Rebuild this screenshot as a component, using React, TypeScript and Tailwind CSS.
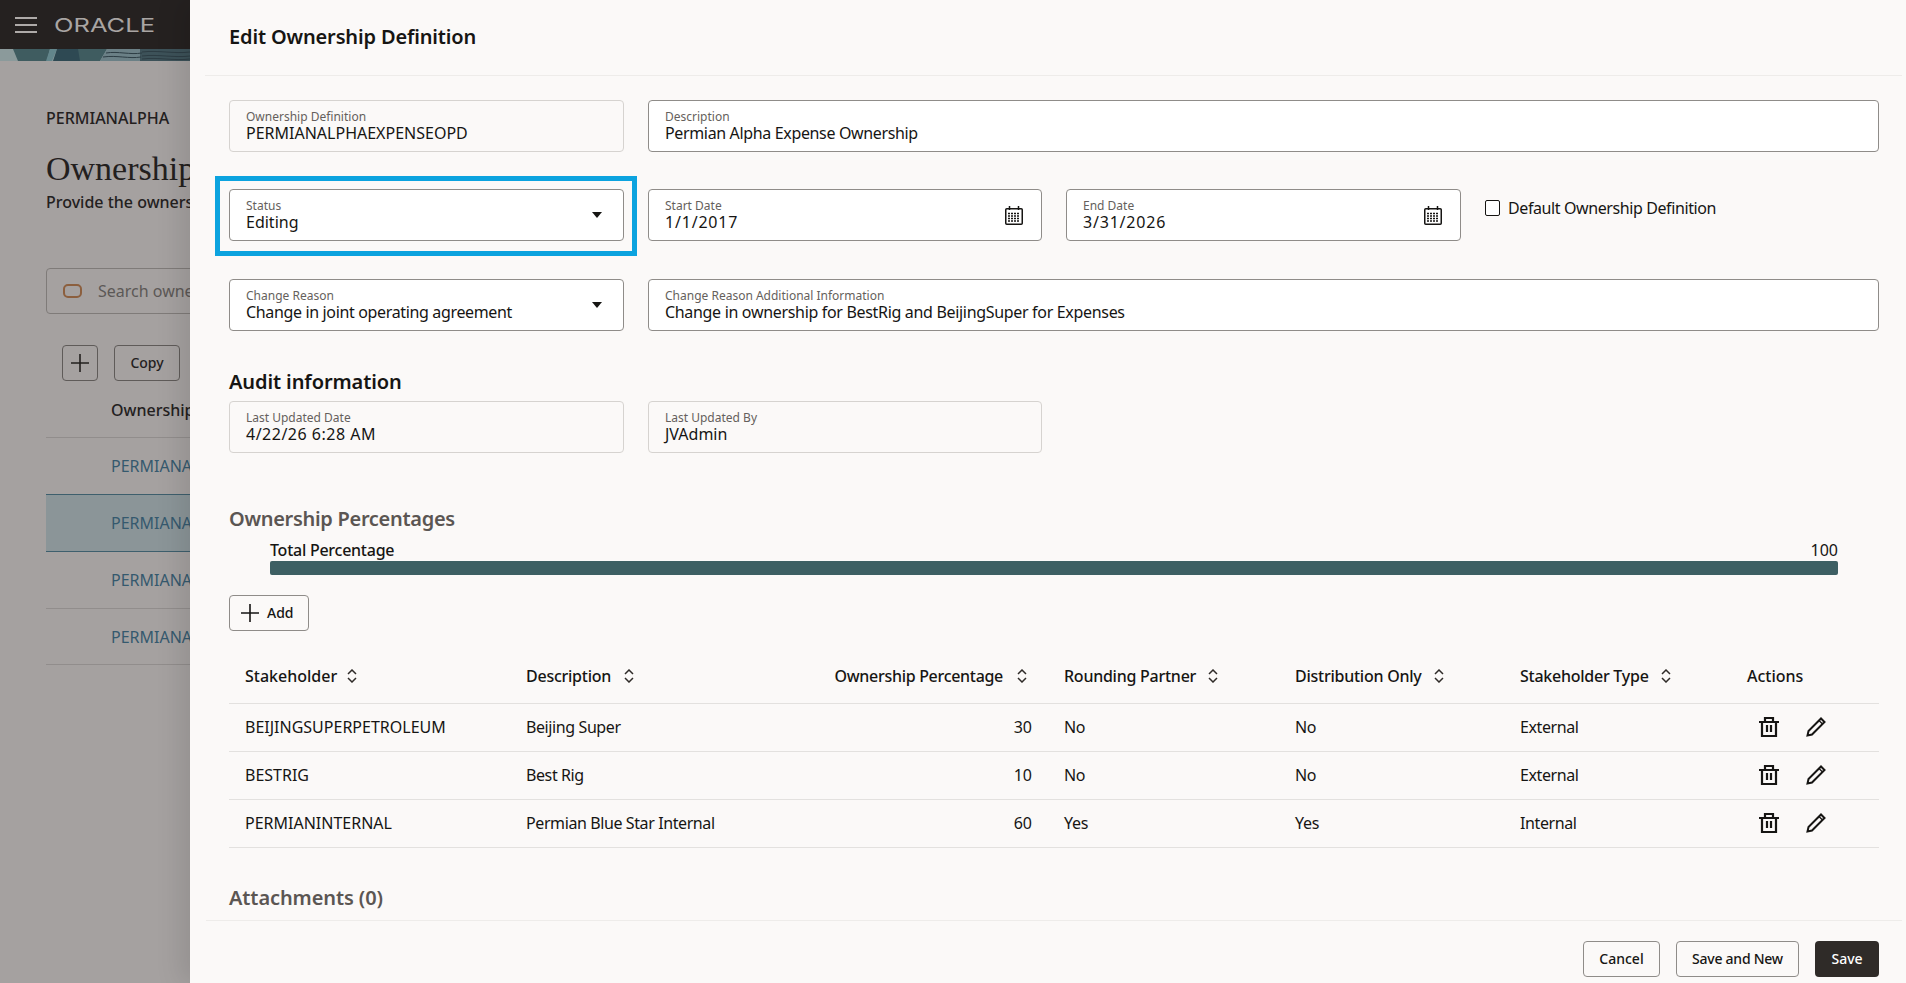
const rows = [
  { stakeholder: "BEIJINGSUPERPETROLEUM", description: "Beijing Super", percent: "30", rounding: "No", distribution: "No", type: "External" },
  { stakeholder: "BESTRIG", description: "Best Rig", percent: "10", rounding: "No", distribution: "No", type: "External" },
  { stakeholder: "PERMIANINTERNAL", description: "Permian Blue Star Internal", percent: "60", rounding: "Yes", distribution: "Yes", type: "Internal" },
];

function SortIcon() {
  return (
    <svg width="10" height="14" viewBox="0 0 10 14" fill="none" stroke="#2f2b28" strokeWidth="1.5" className="shrink-0">
      <path d="M1 5l4-4 4 4M1 9l4 4 4-4" />
    </svg>
  );
}

function Caret() {
  return (
    <svg width="10" height="6" viewBox="0 0 10 6" className="mr-[4px] shrink-0">
      <path d="M0 0h10L5 6z" fill="#161513" />
    </svg>
  );
}

function CalendarIcon() {
  return (
    <svg width="18" height="19" viewBox="0 0 18 19" fill="none" stroke="#161513" className="mr-[1px] shrink-0">
      <rect x="0.75" y="2.75" width="16.5" height="15.5" rx="1" strokeWidth="1.5" />
      <path d="M4.5 0v4M13.5 0v4" strokeWidth="1.5" />
      <path d="M3 7.5h12M3 10h12M3 12.5h12M3 15h12" strokeWidth="1.5" strokeDasharray="2 1" />
    </svg>
  );
}

function TrashIcon() {
  return (
    <svg width="20" height="20" viewBox="0 0 20 20" fill="none" stroke="#161513" strokeWidth="2.2">
      <path d="M0 5h20M6 5V1h8v4M3 5v14h14V5M8 8v7M12 8v7" />
    </svg>
  );
}

function PencilIcon() {
  return (
    <svg width="20" height="20" viewBox="0 0 20 20" fill="none" stroke="#161513" strokeWidth="2">
      <path d="M1.5 18.5l1-4.5L15 1.5l3.5 3.5L6 17.5z" />
      <path d="M13 3.5l3.5 3.5" strokeWidth="1.2" />
    </svg>
  );
}

function PlusIcon({ size }: { size: number }) {
  return (
    <svg width={size} height={size} viewBox="0 0 18 18" fill="none" stroke="currentColor" strokeWidth="1.6" className="shrink-0">
      <path d="M9 0v18M0 9h18" />
    </svg>
  );
}

function Field({
  label,
  value,
  readOnly,
  className = "",
  valueClass = "",
  icon,
}: {
  label: string;
  value: string;
  readOnly?: boolean;
  className?: string;
  valueClass?: string;
  icon?: React.ReactNode;
}) {
  return (
    <div
      className={[
        "flex h-[52px] items-center justify-between rounded-[4px] border pl-4 pr-[17px]",
        readOnly ? "border-[#d6d3d0] bg-[#fbf9f8]" : "border-[#8f8c89] bg-white",
        className,
      ].join(" ")}
    >
      <div className="min-w-0">
        <p className="text-[12px] leading-[14px] text-[#655f5c]">{label}</p>
        <p className={["text-base leading-[18px] text-[#161513]", valueClass].join(" ")}>{value}</p>
      </div>
      {icon}
    </div>
  );
}

function PageBehind() {
  return (
    <div className="flex h-full w-[190px] shrink-0 flex-col overflow-hidden bg-[#a5a1a0]">
      <div className="flex h-[49px] shrink-0 items-center bg-[#252120] pl-[15px]">
        <svg width="22" height="16" viewBox="0 0 22 16" stroke="#aeaaa8" strokeWidth="2" className="shrink-0">
          <path d="M0 1h22M0 8h22M0 15h22" />
        </svg>
        <svg width="102" height="16" viewBox="0 0 102 16" className="ml-[17px] shrink-0">
          <text x="0" y="15" fontFamily="Inter, sans-serif" fontSize="19" fontWeight="400" fill="#a9a5a3" textLength="101" lengthAdjust="spacingAndGlyphs">
            ORACLE
          </text>
        </svg>
      </div>
      <svg width="190" height="12" viewBox="0 0 190 12" className="shrink-0">
        <rect width="190" height="12" fill="#8b9a9b" />
        <path d="M13 0h37l-3 12H18z" fill="#3f5c60" />
        <path d="M50 0h7l-5 12h-6z" fill="#63868c" />
        <path d="M57 0h24l-1 12H53z" fill="#2e4953" />
        <path d="M78 0h29l-7 12H80z" fill="#3f5c60" />
        <path d="M107 0h36v12h-43z" fill="#6b8086" />
        <rect x="140" width="50" height="12" fill="#3d5259" />
        <path d="M106 4c12-2 24 2 36 0M103 8c14-2 26 2 38 0M142 3c16-2 32 2 48 0M142 7c16-2 32 2 48 0M142 10c16-2 32 2 48 0" stroke="#2d3d44" fill="none" />
      </svg>
      <div className="w-[400px] pl-[46px] pt-[48px] font-['Noto_Sans',sans-serif] text-[#23201e]">
        <p className="text-base font-medium leading-[18px]">PERMIANALPHA</p>
        <h2 className="mt-[22px] font-['Liberation_Serif',serif] text-[34px] leading-[40px]">Ownership Definitions</h2>
        <p className="mt-[3px] text-base font-medium leading-[20px]">Provide the ownership details</p>
        <div className="mt-[56px] flex h-[46px] w-[300px] items-center rounded-[4px] border border-[#7f7b79] pl-4 text-[#5c5856]">
          <span className="h-[14px] w-[19px] shrink-0 rounded-[5px] border-[2.5px] border-[#8c5f3e]" />
          <span className="ml-[16px] text-base">Search ownership</span>
        </div>
        <div className="mt-[31px] flex gap-4 pl-4">
          <span className="flex h-9 w-9 items-center justify-center rounded-[4px] border border-[#5f5b59] text-[#23201e]">
            <PlusIcon size={18} />
          </span>
          <span className="flex h-9 w-[66px] items-center justify-center rounded-[4px] border border-[#5f5b59] text-sm font-medium">Copy</span>
        </div>
        <div className="w-[144px] overflow-hidden">
          <div className="flex h-[57px] items-center border-b border-[#918d8c] pl-[65px] pt-[2px] font-medium whitespace-nowrap">Ownership Definition</div>
          <div className="flex h-[57px] items-center border-b border-[#3e5f6d] pl-[65px] whitespace-nowrap text-[#35596e]">PERMIANALPHA</div>
          <div className="flex h-[57px] items-center border-b border-[#3e5f6d] bg-[#8b9598] pl-[65px] whitespace-nowrap text-[#35596e]">PERMIANALPHA</div>
          <div className="flex h-[57px] items-center border-b border-[#918d8c] pl-[65px] whitespace-nowrap text-[#35596e]">PERMIANALPHA</div>
          <div className="flex h-[56px] items-center border-b border-[#918d8c] pl-[65px] whitespace-nowrap text-[#35596e]">PERMIANALPHA</div>
        </div>
      </div>
    </div>
  );
}

function Drawer() {
  return (
    <section className="absolute inset-y-0 left-[190px] right-0 flex flex-col bg-[#fbf9f8] font-['Noto_Sans',sans-serif] text-[#161513] shadow-[-10px_0_24px_rgba(0,0,0,0.1)]">
      <header className="ml-[15px] mr-[4px] flex h-[76px] shrink-0 items-center border-b border-[#eeecea] pb-[2px] pl-[24px]">
        <h1 className="text-xl font-semibold tracking-[-0.15px]">Edit Ownership Definition</h1>
      </header>

      <div className="min-h-0 flex-1 overflow-hidden pl-[39px] pr-[27px] pt-[24px]">
        <div className="flex gap-[24px]">
          <Field label="Ownership Definition" value="PERMIANALPHAEXPENSEOPD" readOnly className="w-[395px] shrink-0" />
          <Field label="Description" value="Permian Alpha Expense Ownership" valueClass="tracking-[-0.35px]" className="flex-1" />
        </div>

        <div className="mt-[37px] flex gap-[24px]">
          <div className="relative w-[395px] shrink-0">
            <Field label="Status" value="Editing" icon={<Caret />} />
            <div className="absolute -bottom-[15px] -left-[14px] -right-[13px] -top-[13px] border-[5px] border-[#0ca3df]" />
          </div>
          <Field label="Start Date" value="1/1/2017" valueClass="tracking-[0.8px]" icon={<CalendarIcon />} className="w-[394px] shrink-0" />
          <Field label="End Date" value="3/31/2026" valueClass="tracking-[0.8px]" icon={<CalendarIcon />} className="w-[395px] shrink-0" />
          <label className="flex h-[38px] items-center gap-[8px] self-start">
            <span className="h-4 w-[15px] rounded-[2px] border border-[#161513] bg-white" />
            <span className="text-base tracking-[-0.4px]">Default Ownership Definition</span>
          </label>
        </div>

        <div className="mt-[38px] flex gap-[24px]">
          <Field label="Change Reason" value="Change in joint operating agreement" valueClass="tracking-[-0.35px]" icon={<Caret />} className="w-[395px] shrink-0" />
          <Field label="Change Reason Additional Information" value="Change in ownership for BestRig and BeijingSuper for Expenses" valueClass="tracking-[-0.32px]" className="flex-1" />
        </div>

        <h2 className="mt-[37px] text-xl font-semibold leading-[28px] tracking-[-0.1px]">Audit information</h2>
        <div className="mt-[5px] flex gap-[24px]">
          <Field label="Last Updated Date" value="4/22/26 6:28 AM" valueClass="tracking-[0.5px]" readOnly className="w-[395px] shrink-0" />
          <Field label="Last Updated By" value="JVAdmin" readOnly className="w-[394px] shrink-0" />
        </div>

        <h2 className="mt-[52px] text-xl font-semibold leading-[28px] tracking-[-0.3px] text-[#5b5653]">Ownership Percentages</h2>
        <div className="mt-[7px] pl-[41px] pr-[41px]">
          <div className="flex items-center justify-between text-base leading-[20px]">
            <span className="font-medium tracking-[-0.25px]">Total Percentage</span>
            <span>100</span>
          </div>
          <div className="mt-[1px] h-[14px] rounded-[2px] bg-[#3d5f63]" />
        </div>
        <button className="mt-5 flex h-9 w-[80px] items-center gap-[8px] rounded-[4px] border border-[#8f8c89] pl-[11px] text-sm font-medium">
          <PlusIcon size={18} />
          Add
        </button>

        <table className="mt-[22px] w-[1650px] table-fixed border-collapse text-base">
          <colgroup>
            <col className="w-[281px]" />
            <col className="w-[538px]" />
            <col className="w-[231px]" />
            <col className="w-[225px]" />
            <col className="w-[227px]" />
            <col className="w-[148px]" />
          </colgroup>
          <thead>
            <tr className="h-[50px] border-b border-[#e3e1df] font-medium">
              <th className="px-4 pb-[3px] text-left font-medium">
                <span className="flex items-center gap-[10px]">Stakeholder <SortIcon /></span>
              </th>
              <th className="relative pb-[3px] text-left font-medium tracking-[-0.25px]">
                <span className="flex items-center gap-[13px] pl-4">Description <SortIcon /></span>
                <span className="absolute right-[21px] top-0 flex h-full items-center gap-[14px] whitespace-nowrap pb-[3px] tracking-[-0.3px]">
                  Ownership Percentage <SortIcon />
                </span>
              </th>
              <th className="px-4 pb-[3px] text-left font-medium tracking-[-0.25px]">
                <span className="flex items-center gap-[12px] whitespace-nowrap">Rounding Partner <SortIcon /></span>
              </th>
              <th className="px-4 pb-[3px] text-left font-medium tracking-[-0.25px]">
                <span className="flex items-center gap-[13px] whitespace-nowrap">Distribution Only <SortIcon /></span>
              </th>
              <th className="px-4 pb-[3px] text-left font-medium tracking-[-0.25px]">
                <span className="flex items-center gap-[12px] whitespace-nowrap">Stakeholder Type <SortIcon /></span>
              </th>
              <th className="px-4 pb-[3px] text-left font-medium">Actions</th>
            </tr>
          </thead>
          <tbody>
            {rows.map((row) => (
              <tr key={row.stakeholder} className="h-[48px] border-b border-[#e3e1df]">
                <td className="px-4">{row.stakeholder}</td>
                <td className="pl-4 pr-4">
                  <span className="flex justify-between">
                    <span className="tracking-[-0.4px]">{row.description}</span>
                    <span>{row.percent}</span>
                  </span>
                </td>
                <td className="px-4 tracking-[-0.3px]">{row.rounding}</td>
                <td className="px-4 tracking-[-0.3px]">{row.distribution}</td>
                <td className="px-4 tracking-[-0.4px]">{row.type}</td>
                <td className="pl-[28px]">
                  <span className="flex items-center gap-[27px]">
                    <TrashIcon />
                    <PencilIcon />
                  </span>
                </td>
              </tr>
            ))}
          </tbody>
        </table>

        <h2 className="mt-[36px] text-xl font-semibold leading-[28px] tracking-[-0.1px] text-[#5b5653]">Attachments (0)</h2>
      </div>

      <footer className="ml-[16px] mr-[4px] flex h-[63px] shrink-0 items-start justify-end gap-4 border-t border-[#eeecea] pr-[23px] pt-[20px] text-sm font-medium">
        <button className="h-9 w-[77px] rounded-[4px] border border-[#8f8c89]">Cancel</button>
        <button className="h-9 w-[123px] rounded-[4px] border border-[#8f8c89] tracking-[-0.25px]">Save and New</button>
        <button className="h-9 w-[64px] rounded-[4px] bg-[#2f2b28] text-white">Save</button>
      </footer>
    </section>
  );
}

export default function App() {
  return (
    <div className="relative h-[983px] w-[1906px] overflow-hidden">
      <PageBehind />
      <Drawer />
    </div>
  );
}
